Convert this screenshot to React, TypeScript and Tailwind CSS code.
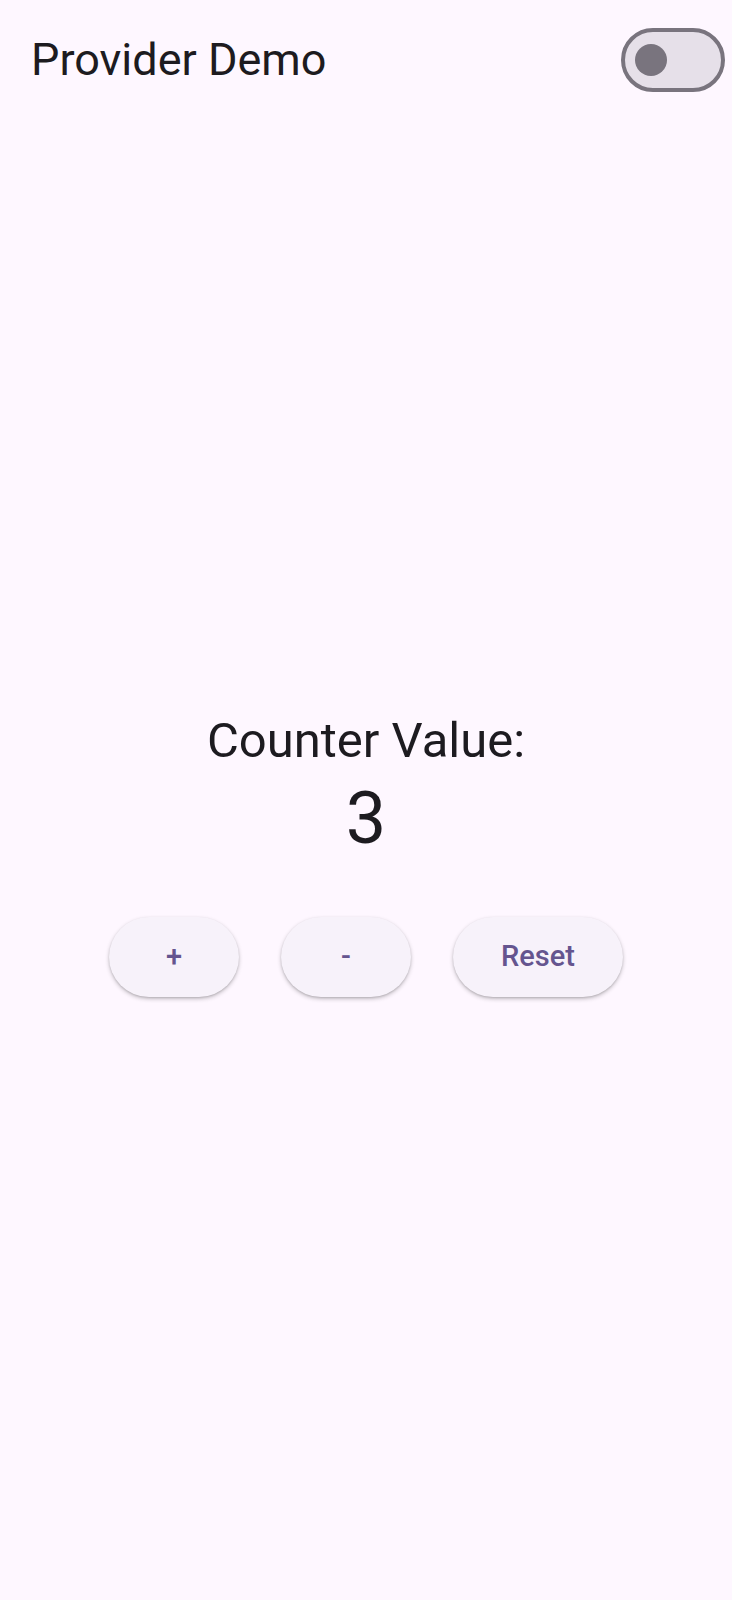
import React, { useState } from 'react';

function Toggle({ on, onChange }: { on: boolean; onChange: () => void }) {
  return (
    <button
      onClick={onChange}
      className="w-[104px] h-[64px] rounded-full border-[4px] border-[#79747E] bg-[#E6E0E9] flex items-center px-[10px]"
    >
      <span className={`w-[32px] h-[32px] rounded-full bg-[#79747E] ${on ? 'ml-auto' : ''}`} />
    </button>
  );
}

export default function App() {
  const [count, setCount] = useState(3);
  const [dark, setDark] = useState(false);

  const btn =
    'h-[80px] rounded-full bg-[#F7F2FA] text-[#65558F] text-[29px] font-medium shadow-[0_2px_4px_rgba(0,0,0,0.22),0_1px_2px_rgba(0,0,0,0.12)] flex items-center justify-center';

  return (
    <div
      className="w-[732px] h-[1600px] bg-[#FEF7FF] text-[#1D1B20] flex flex-col"
      style={{ fontFamily: 'Roboto, "Liberation Sans", sans-serif' }}
    >
      {/* APP BAR */}
      <div className="h-[120px] flex items-center justify-between pl-[31px] pr-[7px]">
        <span className="text-[45px] leading-[52px]">Provider Demo</span>
        <Toggle on={dark} onChange={() => setDark(!dark)} />
      </div>

      {/* BODY */}
      <div className="flex flex-col items-center pt-[593px]">
        <div className="text-[49px] leading-[56px]">Counter Value:</div>
        <div className="text-[72px] leading-[84px] mt-[8px]">{count}</div>

        <div className="flex gap-[42px] mt-[56px]">
          <button onClick={() => setCount(count + 1)} className={`${btn} w-[130px]`}>
            +
          </button>
          <button onClick={() => setCount(count - 1)} className={`${btn} w-[130px]`}>
            -
          </button>
          <button onClick={() => setCount(0)} className={`${btn} px-[48px]`}>
            Reset
          </button>
        </div>
      </div>
    </div>
  );
}
